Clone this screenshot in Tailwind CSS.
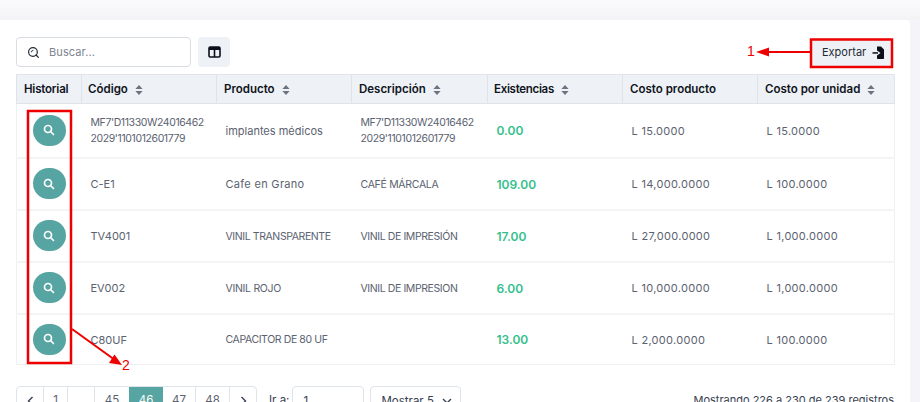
<!DOCTYPE html>
<html lang="en">
<head>
<meta charset="UTF-8" />
<meta name="viewport" content="width=device-width, initial-scale=1" />
<title>Inventario</title>
<script src="https://cdn.jsdelivr.net/npm/@tailwindcss/browser@4"></script>
</head>
<body class="bg-[#f5f5f9] h-[402px] w-[920px] overflow-hidden relative font-['Inter','Open_Sans',sans-serif] text-[#5b6270]">
  <!-- top strip -->
  <div class="h-[20px] bg-gradient-to-b from-[#fbfbfc] to-[#f3f3f6]"></div>

  <!-- card -->
  <div class="w-[910px] h-[382px] bg-white rounded-tr-[4px] px-4 pt-[17px]">
    <div class="flex items-center justify-between h-[30px]">
      <div class="flex items-center gap-[7px]">
        <div class="w-[175px] h-[30px] border border-[#d8dce3] rounded-[4px] flex items-center pl-[10px] gap-[9px]">
          <svg width="13" height="13" viewBox="0 0 24 24" fill="none" stroke="#1f2937" stroke-width="2.2" stroke-linecap="round"><circle cx="11" cy="11" r="8"/><path d="M21 21l-4.300-4.300"/><path d="M8 11a3 3 0 0 1 3-3" stroke-width="1.6"/></svg>
          <span class="text-[11px] tracking-[0.1px] text-[#7d8490]">Buscar...</span>
        </div>
        <div class="w-[32px] h-[30px] bg-[#eef1f6] rounded-[4px] flex items-center justify-center">
          <svg width="13" height="12" viewBox="0 0 13 12" fill="none"><rect x="1" y="1" width="11" height="10" rx="1.2" stroke="#0b0f19" stroke-width="1.6"/><rect x="1" y="1" width="11" height="3" fill="#0b0f19"/><path d="M6.500 1v10" stroke="#0b0f19" stroke-width="1.6"/></svg>
        </div>
      </div>
      <div class="w-[82px] h-[29px] bg-[#eef1f6] rounded-[4px] flex items-center pl-[11px] gap-[6px] mr-[1px] text-[11px] text-[#1f2937]">
        <span>Exportar</span>
        <svg width="12" height="13" viewBox="0 0 12 13"><path d="M5 0.500h4L12 3.500V12.300a.7.7 0 0 1-.7.7H5.700a.7.7 0 0 1-.7-.7z" fill="#0b0f19"/><path d="M5 4.500L8.500 7 5 9.500z" fill="#eef1f6"/><path d="M0.500 6.200H6v1.500H0.500z" fill="#0b0f19"/></svg>
      </div>
    </div>

    <table class="w-[878px] mt-[7px] table-fixed border-collapse text-[11px]">
      <colgroup>
        <col class="w-[65px]" /><col class="w-[135px]" /><col class="w-[135px]" /><col class="w-[136px]" /><col class="w-[135px]" /><col class="w-[135px]" /><col class="w-[137px]" />
      </colgroup>
      <thead>
        <tr class="h-[29px] bg-[#eef1f6] text-[#0f1420] text-[11.5px] font-semibold text-left [&_th]:pt-[2px]">
          <th class="px-[7px] font-semibold border border-[#dfe3ea]"><span class="tracking-[-0.2px]">Historial</span></th>
          <th class="px-[6px] font-semibold border border-[#dfe3ea]"><span class="flex items-center gap-[7px]">Código <svg width="8" height="10" viewBox="0 0 8 10" fill="#6b7280"><path d="M4 0l3.600 4H.4zM4 10L.4 6h7.200z"/></svg></span></th>
          <th class="px-[7px] font-semibold border border-[#dfe3ea]"><span class="flex items-center gap-[7px]">Producto <svg width="8" height="10" viewBox="0 0 8 10" fill="#6b7280"><path d="M4 0l3.600 4H.4zM4 10L.4 6h7.200z"/></svg></span></th>
          <th class="px-[7px] font-semibold border border-[#dfe3ea]"><span class="flex items-center gap-[7px]">Descripción <svg width="8" height="10" viewBox="0 0 8 10" fill="#6b7280"><path d="M4 0l3.600 4H.4zM4 10L.4 6h7.200z"/></svg></span></th>
          <th class="px-[6px] font-semibold border border-[#dfe3ea]"><span class="flex items-center gap-[7px] tracking-[-0.3px]">Existencias <svg width="8" height="10" viewBox="0 0 8 10" fill="#6b7280"><path d="M4 0l3.600 4H.4zM4 10L.4 6h7.200z"/></svg></span></th>
          <th class="px-[7px] font-semibold border border-[#dfe3ea]">Costo producto</th>
          <th class="px-[7px] font-semibold border border-[#dfe3ea]"><span class="flex items-center gap-[7px]">Costo por unidad <svg width="8" height="10" viewBox="0 0 8 10" fill="#6b7280"><path d="M4 0l3.600 4H.4zM4 10L.4 6h7.200z"/></svg></span></th>
        </tr>
      </thead>
      <tbody class="border-x border-b border-[#eef0f3] [&_td:not(:first-child)]:pt-[2px]">
        <tr class="h-[54px] border-b-2 border-[#f3f4f6]">
          <td><div class="mx-auto w-[33px] h-[31px] rounded-full bg-[#56a5a2] flex items-center justify-center"><svg width="12" height="12" viewBox="0 0 24 24" fill="none" stroke="#fff" stroke-width="3.4" stroke-linecap="round"><circle cx="10" cy="10" r="7"/><path d="M21 21l-6-6"/></svg></div></td>
          <td class="pl-[9px] leading-[16.5px] text-[10.5px] tracking-[-0.4px]">MF7'D11330W24016462<br />2029'1101012601779</td>
          <td class="pl-[9px]">implantes médicos</td>
          <td class="pl-[9px] leading-[16.5px] text-[10.5px] tracking-[-0.4px]">MF7'D11330W24016462<br />2029'1101012601779</td>
          <td class="pl-[9px] text-[12px] font-semibold text-[#34bf8c]">0.00</td>
          <td class="pl-[9px] tracking-[0.3px]">L 15.0000</td>
          <td class="pl-[9px] tracking-[0.3px]">L 15.0000</td>
        </tr>
        <tr class="h-[52px] border-b-2 border-[#f3f4f6]">
          <td><div class="mx-auto w-[33px] h-[31px] rounded-full bg-[#56a5a2] flex items-center justify-center"><svg width="12" height="12" viewBox="0 0 24 24" fill="none" stroke="#fff" stroke-width="3.4" stroke-linecap="round"><circle cx="10" cy="10" r="7"/><path d="M21 21l-6-6"/></svg></div></td>
          <td class="pl-[9px]">C-E1</td>
          <td class="pl-[9px] tracking-[0.3px]">Cafe en Grano</td>
          <td class="pl-[9px] text-[10.5px] tracking-[-0.3px]">CAFÉ MÁRCALA</td>
          <td class="pl-[9px] text-[12px] font-semibold text-[#34bf8c]">109.00</td>
          <td class="pl-[9px] tracking-[0.3px]">L 14,000.0000</td>
          <td class="pl-[9px] tracking-[0.3px]">L 100.0000</td>
        </tr>
        <tr class="h-[52px] border-b-2 border-[#f3f4f6]">
          <td><div class="mx-auto w-[33px] h-[31px] rounded-full bg-[#56a5a2] flex items-center justify-center"><svg width="12" height="12" viewBox="0 0 24 24" fill="none" stroke="#fff" stroke-width="3.4" stroke-linecap="round"><circle cx="10" cy="10" r="7"/><path d="M21 21l-6-6"/></svg></div></td>
          <td class="pl-[9px]">TV4001</td>
          <td class="pl-[9px] text-[10.5px] tracking-[-0.4px]">VINIL TRANSPARENTE</td>
          <td class="pl-[9px] text-[10.5px] tracking-[-0.4px]">VINIL DE IMPRESIÓN</td>
          <td class="pl-[9px] text-[12px] font-semibold text-[#34bf8c]">17.00</td>
          <td class="pl-[9px] tracking-[0.3px]">L 27,000.0000</td>
          <td class="pl-[9px] tracking-[0.3px]">L 1,000.0000</td>
        </tr>
        <tr class="h-[52px] border-b-2 border-[#f3f4f6]">
          <td><div class="mx-auto w-[33px] h-[31px] rounded-full bg-[#56a5a2] flex items-center justify-center"><svg width="12" height="12" viewBox="0 0 24 24" fill="none" stroke="#fff" stroke-width="3.4" stroke-linecap="round"><circle cx="10" cy="10" r="7"/><path d="M21 21l-6-6"/></svg></div></td>
          <td class="pl-[9px]">EV002</td>
          <td class="pl-[9px] text-[10.5px] tracking-[-0.3px]">VINIL ROJO</td>
          <td class="pl-[9px] text-[10.5px] tracking-[-0.4px]">VINIL DE IMPRESION</td>
          <td class="pl-[9px] text-[12px] font-semibold text-[#34bf8c]">6.00</td>
          <td class="pl-[9px] tracking-[0.3px]">L 10,000.0000</td>
          <td class="pl-[9px] tracking-[0.3px]">L 1,000.0000</td>
        </tr>
        <tr class="h-[51px]">
          <td><div class="mx-auto w-[33px] h-[31px] rounded-full bg-[#56a5a2] flex items-center justify-center"><svg width="12" height="12" viewBox="0 0 24 24" fill="none" stroke="#fff" stroke-width="3.4" stroke-linecap="round"><circle cx="10" cy="10" r="7"/><path d="M21 21l-6-6"/></svg></div></td>
          <td class="pl-[9px]">C80UF</td>
          <td class="pl-[9px] text-[10.5px] tracking-[-0.4px]">CAPACITOR DE 80 UF</td>
          <td class="pl-[9px]"></td>
          <td class="pl-[9px] text-[12px] font-semibold text-[#34bf8c]">13.00</td>
          <td class="pl-[9px] tracking-[0.3px]">L 2,000.0000</td>
          <td class="pl-[9px] tracking-[0.3px]">L 100.0000</td>
        </tr>
      </tbody>
    </table>

    <!-- pagination -->
    <div class="flex items-start justify-between mt-[21px] text-[11.5px]">
      <div class="flex items-start">
        <div class="flex h-[30px] border border-[#dfe3ea] rounded-[4px] overflow-hidden text-[#5b6270]">
          <span class="w-[27px] flex items-center justify-center border-r border-[#dfe3ea]"><svg width="7" height="10" viewBox="0 0 7 10" fill="none" stroke="#374151" stroke-width="1.4"><path d="M5.500 1L1.500 5l4 4"/></svg></span>
          <span class="w-[24px] flex items-center justify-center border-r border-[#dfe3ea]">1</span>
          <span class="w-[27px] flex items-center justify-center border-r border-[#dfe3ea]">...</span>
          <span class="w-[34px] flex items-center justify-center">45</span>
          <span class="w-[34px] flex items-center justify-center bg-[#56a5a2] text-white">46</span>
          <span class="w-[33px] flex items-center justify-center border-r border-[#dfe3ea]">47</span>
          <span class="w-[34px] flex items-center justify-center border-r border-[#dfe3ea]">48</span>
          <span class="w-[26px] flex items-center justify-center"><svg width="7" height="10" viewBox="0 0 7 10" fill="none" stroke="#374151" stroke-width="1.4"><path d="M1.500 1l4 4-4 4"/></svg></span>
        </div>
        <span class="ml-[12px] mt-[6px] text-[#374151]">Ir a:</span>
        <div class="ml-[3px] w-[72px] h-[30px] border border-[#dfe3ea] rounded-[4px] pl-[10px] pt-[6px] text-[#374151]">1</div>
        <div class="ml-[6px] w-[91px] h-[30px] border border-[#dfe3ea] rounded-[4px] pl-[10px] pt-[6px] text-[#374151] flex gap-[8px]">
          <span>Mostrar 5</span>
          <svg class="mt-[5px]" width="10" height="6" viewBox="0 0 10 6" fill="none" stroke="#374151" stroke-width="1.4"><path d="M1 1l4 4 4-4"/></svg>
        </div>
      </div>
      <span class="mt-[6px] text-[#374151] text-[11px] text-right">Mostrando 226 a 230 de 239 registros</span>
    </div>
  </div>

  <!-- red annotations drawn over the page -->
  <svg class="absolute inset-0 pointer-events-none" width="920" height="402" fill="none">
    <rect x="811" y="39.500" width="81" height="27.500" stroke="#ee0000" stroke-width="2.500"/>
    <rect x="28" y="111" width="43" height="252" stroke="#ee0000" stroke-width="2.500"/>
    <path d="M811 52H768" stroke="#ee0000" stroke-width="2"/>
    <path d="M756 52l13-4.500v9z" fill="#ee0000"/>
    <path d="M72 329L115 360" stroke="#ee0000" stroke-width="2"/>
    <path d="M122 365l-13-2 5.500-8.500z" fill="#ee0000"/>
    <text x="747" y="56" font-family="Liberation Sans" font-size="14" fill="#ee0000">1</text>
    <text x="122" y="370" font-family="Liberation Sans" font-size="14" fill="#ee0000">2</text>
  </svg>
</body>
</html>
